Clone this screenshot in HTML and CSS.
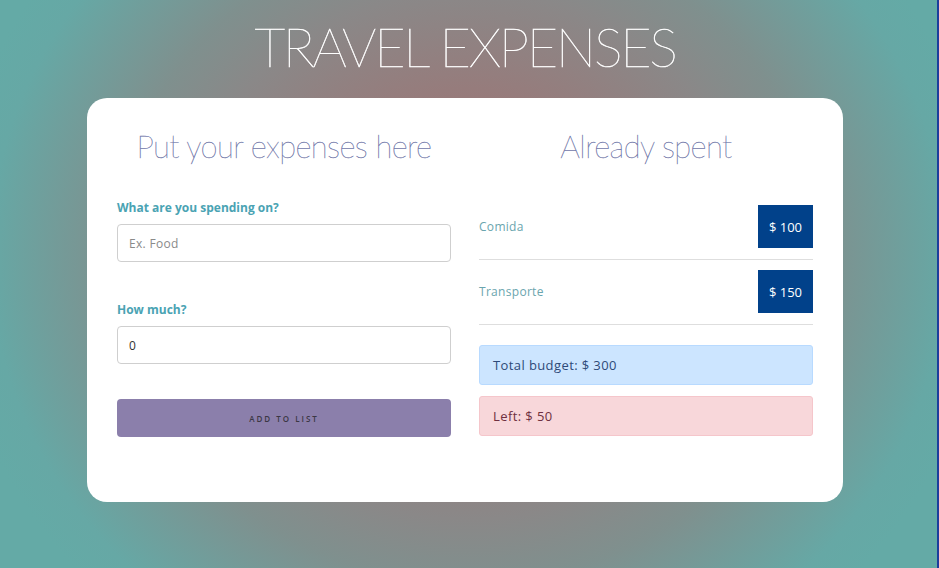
FILE: index.html
```html
<!DOCTYPE html>
<html lang="en">
<head>
<meta charset="utf-8">
<title>Travel Expenses</title>
<link rel="stylesheet" href="styles.css">
</head>
<body>
<div class="page">
  <h1 class="title">TRAVEL EXPENSES</h1>
  <main class="card">
    <section class="col">
      <h2 class="col-title">Put your expenses here</h2>
      <form class="form">
        <label class="label" for="what">What are you spending on?</label>
        <input class="input" id="what" type="text" placeholder="Ex. Food">
        <label class="label label-second" for="much">How much?</label>
        <input class="input" id="much" type="text" value="0">
        <button class="btn" type="button">ADD TO LIST</button>
      </form>
    </section>
    <section class="col">
      <h2 class="col-title">Already spent</h2>
      <ul class="list">
        <li class="item"><span class="item-name">Comida</span><span class="badge">$ 100</span></li>
        <li class="item"><span class="item-name">Transporte</span><span class="badge">$ 150</span></li>
      </ul>
      <div class="alert alert-info">Total budget: $ 300</div>
      <div class="alert alert-danger">Left: $ 50</div>
    </section>
  </main>
</div>
</body>
</html>
```

FILE: styles.css
```css
* { box-sizing: border-box; }
html, body { margin: 0; padding: 0; }
body {
  font-family: "Open Sans", "Noto Sans", sans-serif;
}
.page {
  width: 939px;
  height: 568px;
  overflow: hidden;
  padding: 20px 7px 0 0;
  border-right: 2px solid #1d3d9c;
  background: radial-gradient(ellipse 520px 480px at 50% 45%, #a07070 0%, #9a7878 28%, #8a8888 55%, #7f908e 68%, #66a8a5 92%, #64aaa6 100%);
}
.title {
  margin: 0;
  text-align: center;
  font-family: "Lato", sans-serif;
  font-weight: 100;
  font-size: 54px;
  line-height: 54px;
  color: #ffffff;
  letter-spacing: -2.3px;
  -webkit-text-stroke: 0.5px #ffffff;
}
.card {
  width: 756px;
  height: 404px;
  margin: 24px auto 0;
  background: #fff;
  border-radius: 20px;
  padding: 30px 30px 0;
  display: grid;
  grid-template-columns: 334px 334px;
  column-gap: 28px;
  align-items: start;
}
.col-title {
  margin: 0;
  text-align: center;
  font-family: "Lato", sans-serif;
  font-weight: 100;
  font-size: 31px;
  line-height: 36px;
  color: #6f76a8;
  letter-spacing: -0.6px;
  -webkit-text-stroke: 0.3px #6f76a8;
}
.form { display: flex; flex-direction: column; margin-top: 36px; }
.label {
  font-size: 12px;
  line-height: 16px;
  font-weight: 700;
  color: #4aa3b3;
}
.label-second { margin-top: 40px; }
.input {
  margin-top: 8px;
  height: 38px;
  border: 1px solid #cfcfcf;
  border-radius: 4px;
  padding: 0 11px;
  font-family: inherit;
  font-size: 12px;
  letter-spacing: 0.3px;
  color: #333;
}
.input::placeholder { color: #8a8a8a; }
.btn {
  margin-top: 35px;
  height: 38px;
  border: none;
  border-radius: 4px;
  background: #8b7fab;
  color: #3b3744;
  font-family: inherit;
  font-size: 8px;
  font-weight: 600;
  letter-spacing: 2px;
}
.list { list-style: none; margin: 31px 0 0; padding: 0; }
.item {
  display: flex;
  justify-content: space-between;
  align-items: center;
  padding: 10px 0 11px;
  border-bottom: 1px solid #dedede;
}
.item-name { font-size: 12px; letter-spacing: 0.3px; color: #6aa5ae; }
.badge {
  width: 55px;
  height: 43px;
  display: flex;
  align-items: center;
  justify-content: center;
  background: #01418a;
  color: #fff;
  font-size: 13px;
}
.alert {
  height: 40px;
  border: 1px solid;
  border-radius: 3px;
  padding: 0 13px;
  display: flex;
  align-items: center;
  font-size: 13px;
  letter-spacing: 0.4px;
}
.alert-info { margin-top: 20px; background: #cce5ff; border-color: #b8daff; color: #2e4a78; }
.alert-danger { margin-top: 11px; background: #f8d7da; border-color: #f5c6cb; color: #6e3040; }
```
